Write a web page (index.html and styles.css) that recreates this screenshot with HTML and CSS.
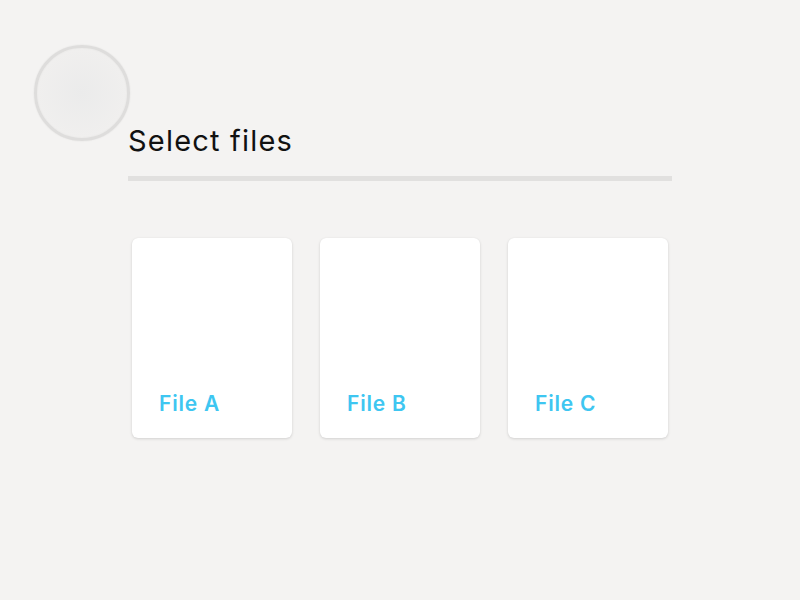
FILE: index.html
```html
<!DOCTYPE html>
<html>
<head>
<meta charset="utf-8">
<link rel="stylesheet" href="styles.css">
</head>
<body>
<div class="page">
  <div class="avatar"></div>
  <main class="content">
    <h1 class="title">Select files</h1>
    <div class="rule"></div>
    <div class="cards">
      <div class="card"><span class="label">File A</span></div>
      <div class="card"><span class="label">File B</span></div>
      <div class="card"><span class="label">File C</span></div>
    </div>
  </main>
</div>
</body>
</html>
```
FILE: styles.css
```css
html, body {
  margin: 0;
  padding: 0;
  background: #f4f3f2;
}
.page {
  position: relative;
  width: 800px;
  height: 600px;
  font-family: Inter, Roboto, "Liberation Sans", sans-serif;
}
.avatar {
  position: absolute;
  left: 34px;
  top: 45px;
  width: 90px;
  height: 90px;
  border-radius: 50%;
  border: 3px solid #dedddc;
  background: radial-gradient(circle at 50% 50%, #ebebeb 0%, #f0efee 70%, #f1f0ef 100%);
  box-shadow: 0 0 2px rgba(0,0,0,0.08), inset 0 0 2px rgba(0,0,0,0.05);
}
.content {
  padding: 122px 0 0 128px;
  width: 544px;
}
.title {
  margin: 0;
  font-size: 29px;
  font-weight: 400;
  line-height: 38px;
  color: #111;
  letter-spacing: 1.2px;
}
.rule {
  margin-top: 16px;
  height: 5px;
  background: #e1e0df;
}
.cards {
  display: flex;
  gap: 28px;
  padding: 57px 4px 0;
}
.card {
  width: 160px;
  height: 200px;
  background: #fff;
  border-radius: 6px;
  box-shadow: 0 1px 3px rgba(0,0,0,0.14), 0 0 1px rgba(0,0,0,0.06);
  display: flex;
  align-items: flex-end;
  box-sizing: border-box;
  padding: 0 0 20px 27px;
}
.label {
  font-size: 21px;
  font-weight: 600;
  color: #3ec6f1;
  line-height: 28px;
  letter-spacing: 0.8px;
}
```
